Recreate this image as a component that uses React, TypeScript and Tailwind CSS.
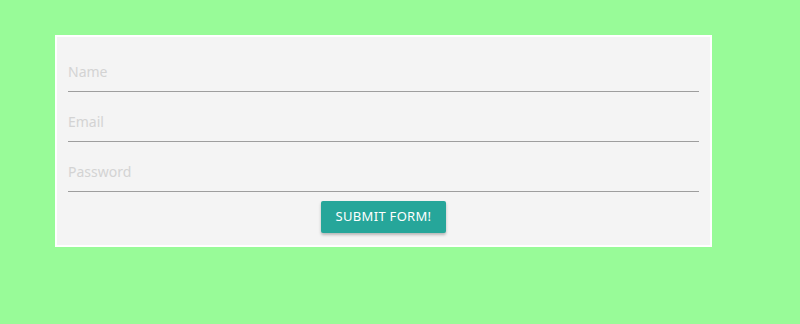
export default function App() {
  return (
    <div className="min-h-screen w-full bg-[#98fb98] pt-[35px] pl-[55px] font-['Noto_Sans',sans-serif]">
      <form
        className="w-[657px] border-2 border-white bg-[#f4f4f4] px-[11px] pt-[5px] pb-[12px] flex flex-col"
        onSubmit={(e) => e.preventDefault()}
      >
        <Field placeholder="Name" type="text" />
        <Field placeholder="Email" type="email" />
        <Field placeholder="Password" type="password" />
        <div className="flex justify-center mt-[9px]">
          <button
            type="submit"
            className="h-[32px] px-[15px] rounded-[2px] bg-[#26a69a] text-white text-[13px] uppercase tracking-[0.3px] shadow-[0_2px_3px_rgba(0,0,0,0.25)]"
          >
            Submit form!
          </button>
        </div>
      </form>
    </div>
  );
}

function Field({ placeholder, type }: { placeholder: string; type: string }) {
  return (
    <input
      type={type}
      placeholder={placeholder}
      className="block w-full h-[50px] box-border pt-[9px] bg-transparent border-b border-[#9e9e9e] text-[14px] text-gray-700 outline-none placeholder:text-[#d3d3d3]"
    />
  );
}
